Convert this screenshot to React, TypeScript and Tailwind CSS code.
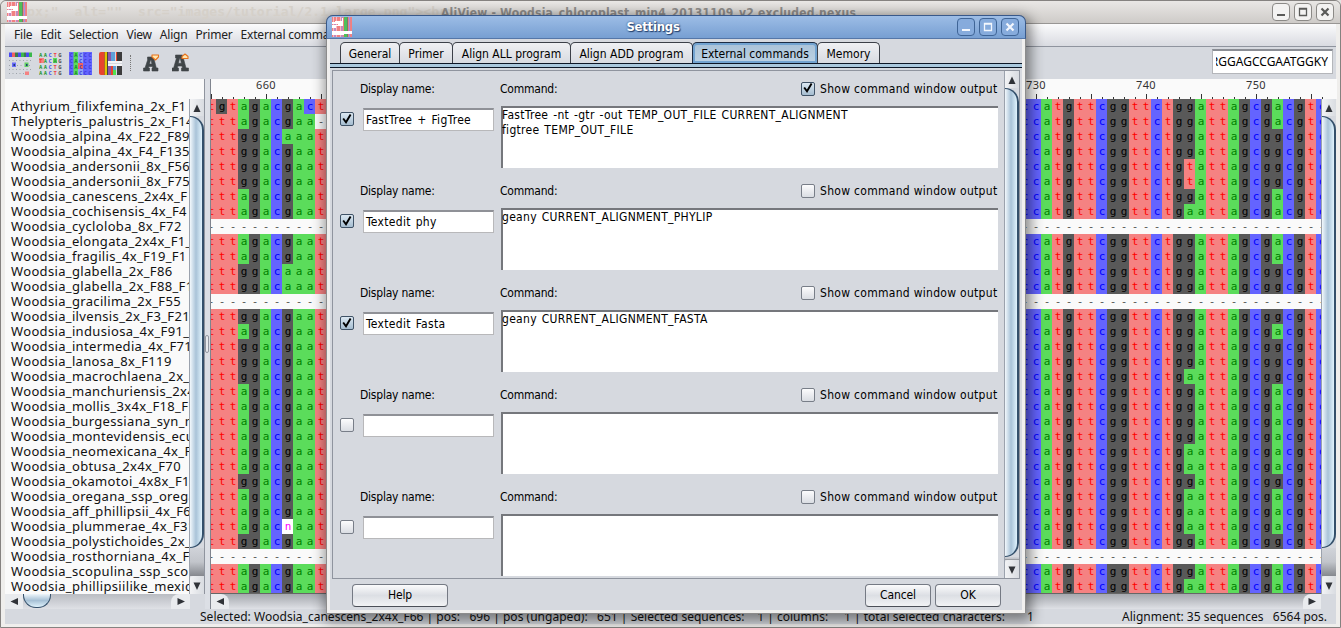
import React from "react";

const NAMES = [
  "Athyrium_filixfemina_2x_F1",
  "Thelypteris_palustris_2x_F14",
  "Woodsia_alpina_4x_F22_F89",
  "Woodsia_alpina_4x_F4_F135",
  "Woodsia_andersonii_8x_F56",
  "Woodsia_andersonii_8x_F75",
  "Woodsia_canescens_2x4x_F",
  "Woodsia_cochisensis_4x_F4",
  "Woodsia_cycloloba_8x_F72",
  "Woodsia_elongata_2x4x_F1_",
  "Woodsia_fragilis_4x_F19_F1",
  "Woodsia_glabella_2x_F86",
  "Woodsia_glabella_2x_F88_F1",
  "Woodsia_gracilima_2x_F55",
  "Woodsia_ilvensis_2x_F3_F21",
  "Woodsia_indusiosa_4x_F91_",
  "Woodsia_intermedia_4x_F71",
  "Woodsia_lanosa_8x_F119",
  "Woodsia_macrochlaena_2x_F",
  "Woodsia_manchuriensis_2x4",
  "Woodsia_mollis_3x4x_F18_F",
  "Woodsia_burgessiana_syn_m",
  "Woodsia_montevidensis_ecu",
  "Woodsia_neomexicana_4x_F",
  "Woodsia_obtusa_2x4x_F70",
  "Woodsia_okamotoi_4x8x_F1",
  "Woodsia_oregana_ssp_orega",
  "Woodsia_aff_phillipsii_4x_F6",
  "Woodsia_plummerae_4x_F31",
  "Woodsia_polystichoides_2x_",
  "Woodsia_rosthorniana_4x_F5",
  "Woodsia_scopulina_ssp_sco",
  "Woodsia_phillipsiilike_mexic",
];

// Variable sites, one character per sequence.
const SITE_658 = "aaggggaa-aagg-gagggaaaaaagaaag-aa";
const SITE_744 = "ggggttga-gggg-ggggaggggaagaaag-ga";
const SITE_752 = "aaggggaa-aagg-gagggaaaaaagaaag-aa";

function leftBases(i: number) {
  if (SITE_658[i] === "-") return "-----------";
  if (i === 0) return "tgtagacgact";
  if (i === 1) return "tttagacgaa-";
  const s = i === 28 ? "n" : i === 2 || i === 11 || i === 12 ? "a" : "g";
  return "ttt" + SITE_658[i] + "gac" + s + "aat";
}

function rightBases(i: number) {
  if (SITE_744[i] === "-") return "-".repeat(28);
  return "ccatgttcggttctg" + SITE_744[i] + "attagcg" + SITE_752[i] + "cgtc";
}

const BASE: Record<string, string> = {
  a: "bg-[#5bdc5b] text-[#008000]",
  c: "bg-[#6464ff] text-[#0000ff]",
  g: "bg-[#595959] text-black",
  t: "bg-[#f58282] text-[#ff0000]",
  n: "bg-white text-[#ff00ff]",
  "-": "bg-[#fafafa] text-[#555]",
};

function Bases({ seq }: { seq: string }) {
  return (
    <div className="flex shrink-0">
      {seq.split("").map((b, i) => (
        <span key={i} className={"block h-[15px] w-[11px] pl-px text-center " + BASE[b]}>
          {b}
        </span>
      ))}
    </div>
  );
}

function Ruler({ start, count }: { start: number; count: number }) {
  return (
    <div className="flex h-full shrink-0 items-end">
      {Array.from({ length: count }, (_, i) => {
        const n = start + i;
        return (
          <div key={n} className="flex h-full w-[11px] shrink-0 flex-col items-center justify-between pl-px">
            <span className="mt-[-1px] whitespace-nowrap font-['Noto_Sans',sans-serif] text-[11px] leading-[14px] tracking-[0.4px] text-[#333]">
              {n % 10 === 0 ? n : ""}
            </span>
            <span className={n % 5 === 0 ? "h-[5px] w-px shrink-0 bg-[#333]" : "h-[2px] w-px shrink-0 bg-[#333]"} />
          </div>
        );
      })}
    </div>
  );
}

const TRI: Record<string, string> = {
  up: "M7 4.5 L10.5 12 H3.5 Z",
  down: "M7 12 L3.5 4.5 H10.5 Z",
  left: "M3.5 7.5 L11 4 V11 Z",
  right: "M11 7.5 L3.5 4 V11 Z",
};

function Arrow({ dir }: { dir: string }) {
  return (
    <svg width="14" height="15" viewBox="0 0 14 15" className="shrink-0">
      <path d={TRI[dir]} fill="#303338" />
    </svg>
  );
}

function VScroll({ tail }: { tail: string }) {
  return (
    <div className="flex h-full w-[15px] shrink-0 flex-col overflow-hidden border-l border-[#9ba2ad] bg-[#d6d9df]">
      <div className="flex h-[17px] shrink-0 items-center justify-center bg-gradient-to-r from-[#f2f3f5] to-[#d9dce1]">
        <Arrow dir="up" />
      </div>
      <div className="min-h-0 flex-1 rounded-r-[14px] border-y border-r-2 border-[#34506b] bg-gradient-to-r from-[#f2f8fc] via-[#a9c3d8] to-[#e0f3fd]" />
      <div className={"shrink-0 bg-gradient-to-b from-[#d0d3d9] via-[#c2c5cb] to-[#85888e] " + tail} />
      <div className="flex h-[18px] shrink-0 items-center justify-center rounded-tl-[3px] bg-gradient-to-r from-[#f2f3f5] to-[#d9dce1]">
        <Arrow dir="down" />
      </div>
    </div>
  );
}

function LogoIcon() {
  return (
    <svg width="20" height="20" viewBox="0 0 20 20" className="shrink-0">
      <rect width="20" height="20" fill="#f08080" />
      <path d="M1.500 0V20M4.500 0V20M8.500 0V20" stroke="#f9b9c4" strokeWidth="1" />
      <path d="M3 5V20M10 0V20M17.500 0V20" stroke="#a391e6" strokeWidth="1.200" />
      <rect x="12" width="4" height="20" fill="#4fbf5a" />
      <path d="M15.500 0V20" stroke="#6f7f6a" strokeWidth="1" />
      <path d="M0 5H3V4H10V1H11V9H4V11H0V8H6V7H0Z M0 14H20V17H12V18H0Z" fill="#fff" />
    </svg>
  );
}

function MiniText({ x, y, c, fill }: { x: number; y: number; c: string; fill: string }) {
  return (
    <text x={x} y={y} fill={fill} fontSize="5.5" fontWeight="bold" fontFamily="DejaVu Sans Mono, monospace">
      {c}
    </text>
  );
}

const INK: Record<string, string> = { A: "#2f9a3b", C: "#5050f0", T: "#f04040", G: "#555555" };

function ToolIcons() {
  return (
    <div className="flex items-center gap-[7px]">
      <svg width="23" height="23" viewBox="0 0 23 23">
        <path d="M0 0.500H3V5H0ZM9 0.500H12V5H9ZM17 0.500H20V5H17Z" fill="#4a4af0" />
        <path d="M3 0.500H6V5H3Z" fill="#f06060" />
        <path d="M6 0.500H9V5H6ZM15 0.500H17V5H15Z" fill="#3a7a4a" />
        <path d="M12 0.500H15V5H12ZM20 0.500H23V5H20Z" fill="#3bb84b" />
        <path d="M3 10.500H7V15H3Z" fill="#6b6bfa" />
        <path d="M15.500 10.500H19.500V15H15.500Z" fill="#62d062" />
        <path d="M16 19.500H20V23H16Z" fill="#f58282" />
        <path d="M17 12H18.500V14H17ZM4.500 12H6V14H4.500Z" fill="#1d3d7a" />
        <path d="M0 8.500H23M0 13.500H2M8 13.500H14M20 13.500H23M0 17.500H23M0 21.500H15" stroke="#9da2a9" strokeWidth="1" strokeDasharray="1 2.500" />
      </svg>
      <svg width="23" height="23" viewBox="0 0 23 23">
        <path d="M0 6H5V11H0Z" fill="#f58282" />
        <path d="M14 6H18V11H14Z" fill="#5bdc5b" />
        {[5, 11, 17, 22.5].map((y, r) =>
          [r === 1 ? "T" : "A", "A", "C", r === 1 ? "A" : "T", "G"].map((c, i) => (
            <MiniText key={y + "-" + i} x={i * 4.8} y={y} c={c} fill={INK[c]} />
          ))
        )}
      </svg>
      <svg width="23" height="23" viewBox="0 0 23 23">
        <rect width="23" height="23" fill="#6464ff" />
        <rect x="4.500" width="4.500" height="23" fill="#5bdc5b" />
        <rect x="9" width="5" height="23" fill="#8ea0f4" />
        <path d="M9 11H14V17H9Z" fill="#f06060" />
        {[5, 11, 17, 22.5].map((y) =>
          ["C", "A", "C", "C", "C"].map((c, i) => (
            <MiniText key={y + "-" + i} x={i * 4.7 + 0.5} y={y} c={c} fill={c === "A" ? "#1d8f2b" : "#3f3fd8"} />
          ))
        )}
      </svg>
      <svg width="23" height="23" viewBox="0 0 23 23">
        <path d="M0 2Q0 0 2 0H5V23H2Q0 23 0 21Z" fill="#e8432e" />
        <path d="M5 0H9V23H5Z" fill="#e0c400" />
        <path d="M5 0H6V23H5Z" fill="#b5622a" />
        <path d="M9 0H12V9H9ZM9 14H12V23H9Z" fill="#8a55a8" />
        <path d="M8 0H9V23H8Z" fill="#444" />
        <path d="M12 0H16V9H12ZM16 14H17V23H16Z" fill="#5ea0d8" />
        <path d="M12 14H14V23H12ZM17 0H18V9H17Z" fill="#e8432e" />
        <path d="M14 18H17V23H14Z" fill="#4fe04f" />
        <path d="M14 14H17V18H14Z" fill="#5ea0d8" />
        <path d="M18 0H23V9H18ZM18 14H23V23H18Z" fill="#3c3c3c" />
        <path d="M9 9H23V11H9ZM9 12H23V14H9Z" fill="#f4f4f6" />
      </svg>
    </div>
  );
}

function FontIcon({ up }: { up?: boolean }) {
  return (
    <svg width="18" height="19" viewBox="0 0 18 19" className="-mt-px shrink-0">
      <path
        d={
          up
            ? "M3.500 2H10.500L14 15H16.500V18H9.500V15H10.500L10 13H5.800L5.300 15H6.500V18H0V15H1.600L4.500 5H3.500Z M7.600 5.500L6.400 10.200H9.400L8.300 5.500Z"
            : "M4.500 4H10.500L13.300 15H15V18H9V15H9.800L9.400 13.500H5.900L5.500 15H6.500V18H0.500V15H2L4.800 6.500H4.500Z M7.500 7L6.500 11H8.900L8.100 7Z"
        }
        fill="#3f4548"
        stroke="#3f4548"
        strokeWidth="0.6"
        fillRule="evenodd"
      />
      <path
        d={up ? "M10 5.500V3.500L13 1L16 3.500V5.500Z" : "M9 2H15.500V4L12.500 7L9 4Z"}
        fill="#ffe7b0"
        stroke="#e8731c"
        strokeWidth="1.1"
        strokeLinejoin="round"
      />
    </svg>
  );
}

function WinButton({ kind, blue }: { kind: string; blue?: boolean }) {
  const stroke = blue ? "#f3f7fd" : "#5a5a58";
  return (
    <span
      className={
        blue
          ? "flex h-[18px] w-[18px] items-center justify-center rounded-[4px] border border-[#3f6597] bg-[#86abdc]"
          : "flex h-[18px] w-[18px] items-center justify-center rounded-[4px] border border-[#8b8986] bg-[#f3f2f1]"
      }
    >
      <svg width="12" height="12" viewBox="0 0 12 12" fill="none" stroke={stroke}>
        {kind === "min" && <path d="M2 9H10" strokeWidth="2" />}
        {kind === "max" && <path d="M2.500 2.500H9.500V9.500H2.500Z M2.500 3.200H9.500" strokeWidth="1.3" />}
        {kind === "close" && <path d="M2.500 2.500L9.500 9.500M9.500 2.500L2.500 9.500" strokeWidth="2.2" />}
      </svg>
    </span>
  );
}

function Check({ on }: { on: boolean }) {
  return (
    <span
      className={
        on
          ? "flex h-[14px] w-[14px] shrink-0 items-center justify-center rounded-[2px] border border-[#3f5266] bg-gradient-to-b from-[#dce8f2] to-[#a5bdd0]"
          : "flex h-[14px] w-[14px] shrink-0 items-center justify-center rounded-[2px] border border-[#787e88] bg-gradient-to-b from-[#fcfcfd] to-[#dadde3]"
      }
    >
      {on && (
        <svg width="12" height="12" viewBox="0 0 12 12" className="-mt-px">
          <path d="M2.200 5.500L5 9.300L9.600 1.500" fill="none" stroke="#000" strokeWidth="1.9" />
        </svg>
      )}
    </span>
  );
}

type Command = { name: string; lines: string[]; enabled: boolean; output: boolean };

const COMMANDS: Command[] = [
  {
    name: "FastTree + FigTree",
    lines: ["FastTree -nt -gtr -out TEMP_OUT_FILE CURRENT_ALIGNMENT", "figtree TEMP_OUT_FILE"],
    enabled: true,
    output: true,
  },
  { name: "Textedit phy", lines: ["geany CURRENT_ALIGNMENT_PHYLIP"], enabled: true, output: false },
  { name: "Textedit Fasta", lines: ["geany CURRENT_ALIGNMENT_FASTA"], enabled: true, output: false },
  { name: "", lines: [], enabled: false, output: false },
  { name: "", lines: [], enabled: false, output: false },
];

function CommandRow({ cmd }: { cmd: Command }) {
  return (
    <div className="flex h-[102px] shrink-0 flex-col">
      <div className="mb-[4px] flex h-[27px] items-center pl-[27px] tracking-[-0.22px]">
        <span className="w-[140px]">Display name:</span>
        <span>Command:</span>
        <span className="ml-auto flex items-center gap-[5px]">
          <Check on={cmd.output} />
          <span className="w-[179px] whitespace-nowrap tracking-[0.29px]">Show command window output</span>
        </span>
      </div>
      <div className="flex items-start tracking-[0.3px] [word-spacing:1.2px]">
        <div className="mt-[6px] flex w-[30px] pl-[7px]">
          <Check on={cmd.enabled} />
        </div>
        <div className="mt-[2px] flex h-[23px] w-[131px] items-center border border-t-2 border-[#b8b8ba] border-t-[#8f9197] bg-white pl-[2px]">
          {cmd.name}
        </div>
        <div className="ml-[7px] h-[62px] w-[497px] border-t-2 border-l-2 border-[#75777c] bg-white leading-[15px]">
          {cmd.lines.map((l) => (
            <div key={l} className="-ml-px whitespace-nowrap">
              {l}
            </div>
          ))}
        </div>
      </div>
    </div>
  );
}

const TABS: [string, string][] = [
  ["General", "w-[60px]"],
  ["Primer", "w-[54px]"],
  ["Align ALL program", "w-[119px]"],
  ["Align ADD program", "w-[123px]"],
  ["External commands", "w-[126px]"],
  ["Memory", "w-[63px]"],
];

function Button({ label, className }: { label: string; className: string }) {
  return (
    <span
      className={
        "flex h-[23px] items-center justify-center rounded-[4px] border border-[#757a84] border-b-[#4c5058] bg-gradient-to-b from-[#fbfbfc] via-[#dcdfe4] to-[#f2f3f5] " +
        className
      }
    >
      {label}
    </span>
  );
}

function SettingsDialog() {
  return (
    <div className="absolute top-[15px] left-[326px] flex h-[599px] w-[700px] flex-col rounded-t-[7px] border border-[#8c8c8c] bg-[#f0efee] font-['DejaVu_Sans_Condensed','DejaVu_Sans',sans-serif] text-[12px] tracking-[-0.1px] text-black shadow-[2px_4px_13px_3px_rgba(0,0,0,0.45)] [font-stretch:condensed]">
      <div className="-mx-px -mt-px flex h-[24px] shrink-0 items-center rounded-t-[7px] border border-[#39598a] border-b-[#5577a8] bg-gradient-to-b from-[#9dbde6] to-[#779fd2] pr-[6px] pl-[5px]">
        <LogoIcon />
        <span className="flex-1 pr-[3px] text-center text-[13px] font-bold tracking-[-0.25px] text-white [text-shadow:0_0_2px_#23406e,1px_1px_1px_#23406e]">
          Settings
        </span>
        <span className="flex gap-1">
          <WinButton kind="min" blue />
          <WinButton kind="max" blue />
          <WinButton kind="close" blue />
        </span>
      </div>
      <div className="mx-[3px] mb-[3px] flex min-h-0 flex-1 flex-col bg-[#d6d9df] pt-[3px]">
        <div className="flex h-[21px] shrink-0 pl-[10px]">
          {TABS.map(([label, w]) => (
            <span
              key={label}
              className={
                "-mr-px flex shrink-0 items-center justify-center whitespace-nowrap rounded-t-[5px] border border-b-0 pt-px tracking-[0px] " +
                w +
                (label === "External commands"
                  ? " border-[#1c2c44] bg-gradient-to-b from-[#a9c2d8] to-[#bcd2e4] shadow-[inset_0_0_0_2px_#73a4d1]"
                  : " border-[#3c4048] bg-gradient-to-b from-[#eff0f3] to-[#d8dbe1]")
              }
            >
              {label}
            </span>
          ))}
        </div>
        <div className="h-[5px] shrink-0 border-y border-[#0c1626] bg-[#aac8dd]" />
        <div className="mt-[2px] mr-[2px] ml-[2px] flex h-[509px] shrink-0 border border-[#8f949e]">
          <div className="flex h-[507px] min-w-0 flex-1 flex-col overflow-hidden pt-[4px] pr-[5px]">
            <div className="flex flex-col">
              {COMMANDS.map((c, i) => (
                <CommandRow key={i} cmd={c} />
              ))}
            </div>
          </div>
          <VScroll tail="h-[3px]" />
        </div>
        <div className="flex h-[35px] items-center pt-px pr-[21px] pl-[22px]">
          <Button label="Help" className="w-[96px]" />
          <Button label="Cancel" className="ml-auto w-[66px]" />
          <Button label="OK" className="ml-[4px] w-[66px]" />
        </div>
      </div>
    </div>
  );
}

export default function App() {
  return (
    <div className="relative h-[628px] w-[1341px] overflow-hidden bg-[#e4e3e1] font-['Noto_Sans',sans-serif] text-black">
      <div className="flex h-[628px] flex-col rounded-t-[6px] border border-[#858280] bg-[#efeeec] px-[4px] pb-[3px]">
        <div className="-mx-[4px] flex h-[23px] shrink-0 items-center overflow-hidden rounded-t-[6px] border-b border-[#989694] bg-gradient-to-b from-[#e9e7e5] to-[#cecbc8] pr-[6px] pl-[6px]">
          <LogoIcon />
          <span className="w-[414px] whitespace-pre font-['DejaVu_Sans_Mono',monospace] text-[13px] font-bold tracking-[0.1px] text-[#d5d0c9]">
            {'px;"  alt=""  src="images/tutorial/2.1.large.png"><br>'}
          </span>
          <span className="pt-[2px] font-['DejaVu_Sans_Condensed','DejaVu_Sans',sans-serif] text-[12px] font-bold tracking-[0.22px] whitespace-nowrap text-[#8f8d8b] [font-stretch:condensed]">
            AliView - Woodsia_chloroplast_min4_20131109_v2 excluded.nexus
          </span>
          <span className="ml-auto flex gap-1">
            <WinButton kind="min" />
            <WinButton kind="max" />
            <WinButton kind="close" />
          </span>
        </div>
        <div className="flex h-[23px] shrink-0 items-center gap-[8px] border-b border-[#8f949e] bg-gradient-to-b from-[#fbfbfc] to-[#d9dbe1] pl-[9px] text-[12px] tracking-[-0.2px] text-[#222]">
          {["File", "Edit", "Selection", "View", "Align", "Primer", "External commands", "Help"].map((m) => (
            <span key={m} className="whitespace-nowrap">
              {m}
            </span>
          ))}
        </div>
        <div className="flex h-[32px] shrink-0 items-center bg-[#d6d9df] pr-[3px] pl-[4px]">
          <ToolIcons />
          <span className="mx-[8px] h-[16px] border-l border-dotted border-[#777]" />
          <div className="ml-[4px] flex gap-[11px]">
            <FontIcon />
            <FontIcon up />
          </div>
          <div className="-mt-[3px] ml-auto flex h-[25px] w-[121px] items-center overflow-hidden border border-t-2 border-[#b4b6ba] border-t-[#8a8d94] bg-white pl-[3px] text-[12px]">
            <span className="flex w-[112px] justify-end overflow-hidden whitespace-nowrap">RGGAGCCGAATGGKY</span>
          </div>
        </div>
        <div className="flex h-[530px] shrink-0 bg-[#d6d9df]">
          <div className="flex w-[200px] shrink-0 flex-col">
            <div className="flex h-[515px] overflow-hidden border-r border-[#8f949e] bg-[#fafafa]">
              <div className="ml-px w-[184px] overflow-hidden pt-[20px] pl-[5px] text-[13px] leading-[15px] tracking-[0.34px] text-[#111]">
                {NAMES.map((n) => (
                  <div key={n} className="h-[15px] whitespace-nowrap">
                    {n}
                  </div>
                ))}
              </div>
              <div className="h-full w-[15px] pt-[20px]">
                <VScroll tail="h-[28px]" />
              </div>
            </div>
            <div className="flex h-[15px] w-[185px] items-start bg-gradient-to-b from-[#b9bcc2] to-[#dfe1e6]">
              <span className="flex h-[15px] w-[18px] justify-center bg-[#e9ebee]">
                <Arrow dir="left" />
              </span>
              <span className="h-[14px] w-[28px] rounded-b-[13px] border border-t-0 border-[#34506b] bg-gradient-to-b from-[#eef5fa] via-[#a6c0d5] to-[#dff2fc]" />
              <span className="ml-auto flex h-[15px] w-[19px] justify-center rounded-tl-[8px] bg-[#e9ebee]">
                <Arrow dir="right" />
              </span>
            </div>
          </div>
          <div className="flex w-[6px] shrink-0 items-center border-r border-[#7f848e] bg-[#dcdfe5]">
            <span className="h-[18px] w-[4px] rounded-[2px] border border-[#9297a1] bg-[#e8eaee]" />
          </div>
          <div className="flex w-[1126px] shrink-0 flex-col">
            <div className="flex h-[20px] shrink-0 overflow-hidden bg-[#fafafa]">
              <div className="-ml-[6px] flex w-[814px] shrink-0">
                <Ruler start={655} count={74} />
              </div>
              <Ruler start={729} count={28} />
            </div>
            <div className="flex h-[495px]">
              <div className="h-[495px] w-[1110px] overflow-hidden border-b border-[#666] bg-[#fafafa] font-['DejaVu_Sans_Mono',monospace] text-[11px] leading-[15px]">
                {NAMES.map((n, i) => (
                  <div key={n} className="-ml-[6px] flex h-[15px]">
                    <Bases seq={leftBases(i)} />
                    <span className="w-[693px] shrink-0" />
                    <Bases seq={rightBases(i)} />
                  </div>
                ))}
              </div>
              <VScroll tail="h-[28px]" />
            </div>
            <div className="flex h-[15px] w-[1110px] justify-between bg-gradient-to-b from-[#a5a8ae] to-[#dfe1e6]">
              <span className="flex h-[15px] w-[18px] justify-center rounded-tr-[8px] bg-[#e9ebee]">
                <Arrow dir="left" />
              </span>
              <span className="flex h-[15px] w-[18px] justify-center rounded-tl-[8px] bg-[#e9ebee]">
                <Arrow dir="right" />
              </span>
            </div>
          </div>
        </div>
        <div className="flex min-h-0 flex-1 items-center justify-between bg-[#d6d9df] pt-px pr-[9px] pl-[195px] text-[12px] leading-[14px] text-[#111]">
          <span className="tracking-[0.02px] whitespace-pre">
            {"Selected: Woodsia_canescens_2x4x_F66 | pos:   696 | pos (ungaped):   651 | Selected sequences:    1 | columns:     1 | total selected characters:       1"}
          </span>
          <span className="whitespace-pre">{"Alignment: 35 sequences   6564 pos."}</span>
        </div>
      </div>
      <SettingsDialog />
    </div>
  );
}
